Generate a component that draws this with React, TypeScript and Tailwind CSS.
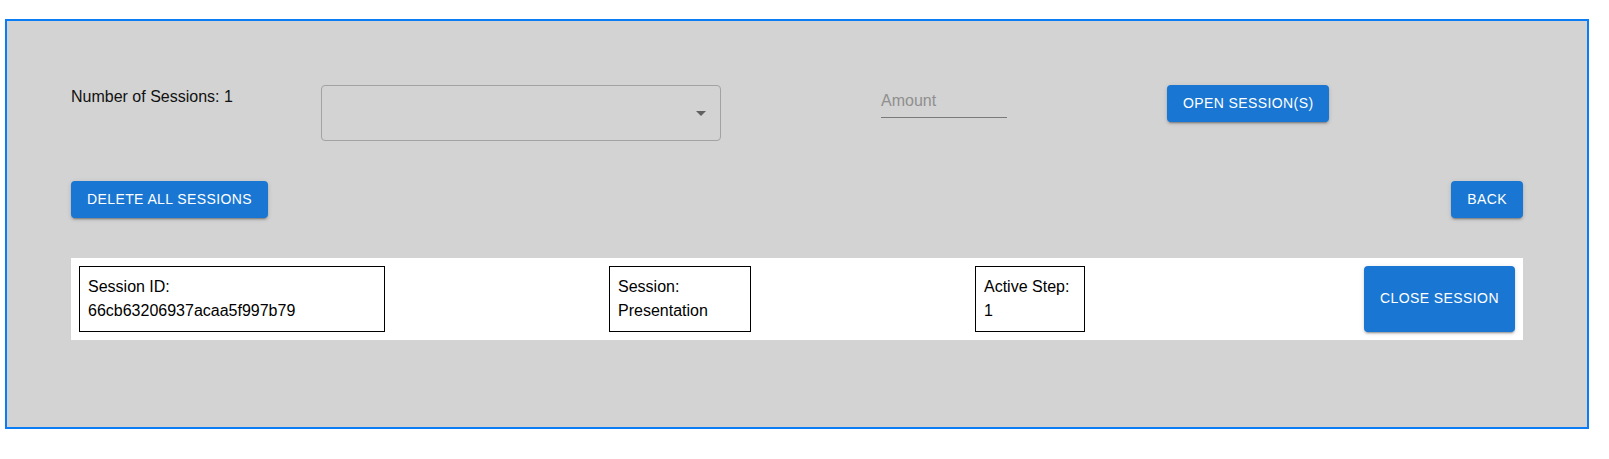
import React from "react";

const btn =
  "rounded-[4px] bg-[#1976d2] px-4 py-[6px] text-[14px] font-medium uppercase leading-[24.5px] tracking-[0.4px] text-white whitespace-nowrap shadow-[0px_3px_1px_-2px_rgba(0,0,0,0.2),0px_2px_2px_0px_rgba(0,0,0,0.14),0px_1px_5px_0px_rgba(0,0,0,0.12)]";

interface InfoBoxProps {
  label: string;
  value: string;
  width: string;
}

const InfoBox: React.FC<InfoBoxProps> = ({ label, value, width }) => (
  <div className={`${width} h-full whitespace-nowrap border border-black p-2 text-[16px] leading-6 text-black`}>
    <div>{label}</div>
    <div>{value}</div>
  </div>
);

export default function App() {
  return (
    <div className="min-h-screen bg-white font-['Liberation_Sans',Arial,sans-serif]">
      <div className="ml-[5px] mt-[19px] h-[410px] w-[1584px] border-2 border-[#0a7cf6] bg-[#d3d3d3] px-16 pt-16">
        {/* top row */}
        <div className="flex items-start">
          <div className="w-[250px] shrink-0 text-[16px] leading-6 text-[#111]">Number of Sessions: 1</div>
          <div className="relative h-[56px] w-[400px] shrink-0 rounded-[4px] border border-[#a2a2a2]">
            <svg
              viewBox="0 0 24 24"
              className="absolute right-[7px] top-[15px] h-6 w-6 fill-[#616161]"
            >
              <path d="M7 10l5 5 5-5z" />
            </svg>
          </div>
          <div className="ml-[160px] w-[126px] shrink-0 border-b border-[#7a7a7a] pb-[5px] pt-[4px]">
            <div className="text-[16px] leading-[23px] text-[#8f8f8f]">Amount</div>
          </div>
          <button className={`ml-[160px] ${btn}`}>Open Session(s)</button>
        </div>

        {/* actions row */}
        <div className="mt-10 flex items-center justify-between">
          <button className={btn}>Delete All Sessions</button>
          <button className={btn}>Back</button>
        </div>

        {/* session row */}
        <div className="mt-10 flex h-[82px] bg-white p-2">
          <div className="w-[530px] shrink-0">
            <InfoBox label="Session ID:" value="66cb63206937acaa5f997b79" width="w-[306px]" />
          </div>
          <div className="w-[366px] shrink-0">
            <InfoBox label="Session:" value="Presentation" width="w-[142px]" />
          </div>
          <div className="w-[389px] shrink-0">
            <InfoBox label="Active Step:" value="1" width="w-[110px]" />
          </div>
          <button className={`${btn} min-w-0 flex-1 px-0`}>Close Session</button>
        </div>
      </div>
    </div>
  );
}
